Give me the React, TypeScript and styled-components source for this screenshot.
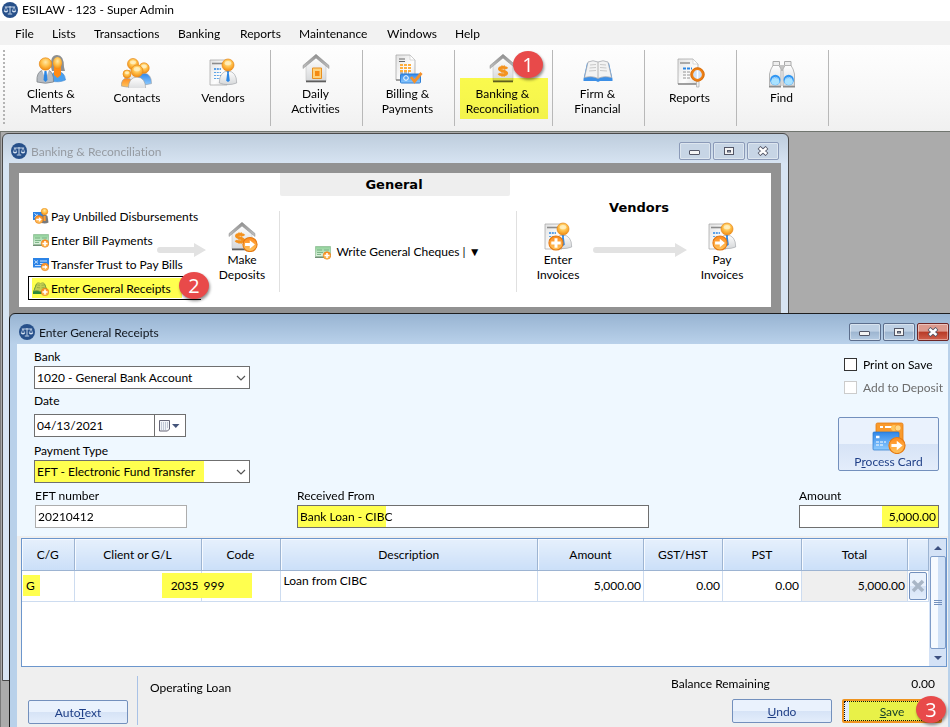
import React from "react";
import styled, { createGlobalStyle, css } from "styled-components";

const YELLOW = "#ffff4f";
const UI_FONT = 'Lato, "Open Sans", sans-serif';

const GlobalStyle = createGlobalStyle`
  * { box-sizing: border-box; }
  html, body { margin: 0; }
  body, button, input, select {
    font-family: ${UI_FONT};
    font-size: 12px;
    line-height: 15px;
    color: #000;
    font-variant-ligatures: none;
  }
  button { padding: 0; border: 0; background: none; cursor: pointer; }
  svg { display: block; flex: none; }
`;

/* ---------- icons ---------- */

const HiddenSvg = styled.svg`
  position: absolute;
`;

const Defs = () => (
  <HiddenSvg width="0" height="0" aria-hidden="true">
    <defs>
      <radialGradient id="gold" cx="0.5" cy="0.35" r="0.65">
        <stop offset="0" stopColor="#ffe9a8" />
        <stop offset="0.5" stopColor="#ffc04a" />
        <stop offset="1" stopColor="#f08a10" />
      </radialGradient>
      <linearGradient id="orange" x1="0" y1="0" x2="0" y2="1">
        <stop offset="0" stopColor="#ff8a1c" />
        <stop offset="1" stopColor="#ffc560" />
      </linearGradient>
      <linearGradient id="blue" x1="0" y1="0" x2="0" y2="1">
        <stop offset="0" stopColor="#2f86e8" />
        <stop offset="1" stopColor="#8ecbff" />
      </linearGradient>
      <linearGradient id="silver" x1="0" y1="0" x2="0" y2="1">
        <stop offset="0" stopColor="#ffffff" />
        <stop offset="1" stopColor="#d6d8da" />
      </linearGradient>
      <linearGradient id="roof" x1="0" y1="0" x2="0" y2="1">
        <stop offset="0" stopColor="#8f8f8f" />
        <stop offset="1" stopColor="#c2c2c2" />
      </linearGradient>
      <linearGradient id="paper" x1="0" y1="0" x2="1" y2="1">
        <stop offset="0" stopColor="#e2e2e2" />
        <stop offset="0.6" stopColor="#fdfdfd" />
        <stop offset="1" stopColor="#dcdcdc" />
      </linearGradient>
      <linearGradient id="green" x1="0" y1="0" x2="0" y2="1">
        <stop offset="0" stopColor="#8ccf96" />
        <stop offset="1" stopColor="#e4f5e4" />
      </linearGradient>
    </defs>
  </HiddenSvg>
);

const Scales = () => (
  <svg width="16" height="16" viewBox="0 0 16 16" aria-hidden="true">
    <circle cx="8" cy="8" r="8" fill="#27508a" />
    <g stroke="#d5e2f2" fill="none" strokeWidth="0.9">
      <path d="M2.8 5h10.4M8 4v7.6M5.8 12h4.4" />
      <path d="M4 5 2.2 9M4 5l1.8 4M12 5l-1.8 4M12 5l1.8 4" strokeWidth="0.6" />
    </g>
    <path d="M1.9 8.8h4.2a2.1 1.7 0 0 1-4.2 0zM9.9 8.8h4.2a2.1 1.7 0 0 1-4.2 0z" fill="#d5e2f2" />
  </svg>
);

const Bust = ({ x, y, r, body = "url(#silver)", tie = false }: { x: number; y: number; r: number; body?: string; tie?: boolean }) => (
  <g transform={`translate(${x} ${y})`}>
    <path
      d={`M${-r * 1.45} ${r * 3}q0-${r * 1.9} ${r * 1.45}-${r * 2}q${r * 1.45} ${r * 0.1} ${r * 1.45} ${r * 2}q-${r * 1.45} ${r * 0.55}-${r * 2.9} 0z`}
      fill={body}
      stroke="#9a9da2"
      strokeWidth="0.6"
    />
    {tie && <path d={`M-1.3 ${r}h2.6l-.5 2 1 ${r * 1.3}-1.8 1.3-1.8-1.3 1-${r * 1.3}z`} fill="#2b86e4" />}
    <circle r={r} fill="url(#gold)" stroke="#e68a1a" strokeWidth="0.7" />
    <ellipse cy={-r * 0.3} rx={r * 0.55} ry={r * 0.35} fill="#fff3c8" opacity="0.75" />
  </g>
);

const RoundBadge = ({ x, y, r, kind }: { x: number; y: number; r: number; kind: "plus" | "arrow" }) => (
  <g transform={`translate(${x} ${y}) scale(${r / 7})`}>
    <circle r="6.6" fill="url(#orange)" stroke="#e57a12" strokeWidth="1" />
    {kind === "plus" ? (
      <path d="M-1.4-4.4h2.8v3h3v2.8h-3v3h-2.8v-3h-3v-2.8h3z" fill="#fff" />
    ) : (
      <path d="M-4.6-1.3h4.4v-2.7l4.8 4-4.8 4v-2.7h-4.4z" fill="#fff" />
    )}
  </g>
);

const House = () => (
  <>
    <path d="M6 12 16 3l10 9v15H6z" fill="url(#silver)" stroke="#c4c4c4" strokeWidth="0.6" />
    <path d="M6 26.500h20v1.800H6z" fill="#5e5e5e" />
    <path d="M3 14.500v-3L16 .3l13 11.200v3L16 4z" fill="url(#roof)" stroke="#8c8c8c" strokeWidth="0.500" />
  </>
);

const Sheet = ({ x = 3, y = 1, w = 19, h = 26 }: { x?: number; y?: number; w?: number; h?: number }) => (
  <g transform={`translate(${x} ${y})`}>
    <path d={`M0 0h${w - 5}l5 5v${h - 5}H0z`} fill="url(#paper)" stroke="#a9a9a9" strokeWidth="0.8" />
    <path d={`M${w - 5} 0v5h5z`} fill="#fff" stroke="#bbb" strokeWidth="0.5" />
    <path d={`M0 ${h}h${w}`} stroke="#777" strokeWidth="1.2" />
  </g>
);

const InvoiceArt = () => (
  <>
    <path d="M3 2h17v25H3z" fill="url(#paper)" stroke="#ababab" strokeWidth="0.8" />
    <path d="M5 5.5h11" stroke="#8c8c8c" strokeWidth="1.6" />
    <path d="M7 11h7" stroke="#2b86e4" strokeWidth="1.5" strokeDasharray="2 .8" />
    <path d="M7 14.5h7M7 17.5h7M7 20.5h7" stroke="#5ea4e6" strokeWidth="1.2" strokeDasharray="2 .8" />
    <Bust x={21} y={7} r={6} tie />
  </>
);

type Art =
  | "clients" | "contacts" | "vendors" | "house" | "billing" | "bank"
  | "book" | "reports" | "find" | "deposit" | "invoiceAdd" | "invoicePay";

const Dollar = ({ x, y }: { x: number; y: number }) => (
  <g transform={`translate(${x} ${y})`} fill="none" stroke="#f4921e">
    <path d="M4-2.200C3-4-3.600-4.200-3.600-1.900-3.600.600 3.900-.6 3.700 2.200 3.500 4.600-3 4.400-4.200 2.400" strokeWidth="2.800" />
    <path d="M-1-5.800V5.800M1.200-5.800V5.800" strokeWidth="1.100" />
  </g>
);

const art: Record<Art, React.ReactNode> = {
  clients: (
    <>
      <path d="M16 13q-1-12 6-12t7 12l1 4h-13z" fill="#8d8f90" />
      <path d="M16 27q0-9 6-10 8 1 8.500 9-6 3-14.500 1z" fill="#4aa0ee" stroke="#2d78c8" strokeWidth="0.5" />
      <path d="M19 13h7v8l-3.500 3-3.500-3z" fill="#ff8a14" />
      <ellipse cx="22.500" cy="9" rx="4.500" ry="6" fill="url(#gold)" />
      <path d="M2 28q-1-10 6-12h5q6 2 5.500 12-8 2.500-16.500 0z" fill="#b7bcc2" stroke="#777b80" strokeWidth="0.7" />
      <path d="m7 16 3.500 9 3.500-9z" fill="#fff" />
      <path d="M9.500 17h2l1 9-2 2-2-2z" fill="#2b86e4" />
      <circle cx="10.500" cy="10" r="6.200" fill="url(#gold)" stroke="#e68a1a" strokeWidth="0.7" />
    </>
  ),
  contacts: (
    <>
      <Bust x={12} y={6} r={5.500} />
      <Bust x={23} y={10} r={5.200} body="url(#blue)" />
      <Bust x={6} y={16} r={4} body="url(#orange)" />
      <Bust x={16} y={13} r={6} />
    </>
  ),
  vendors: <InvoiceArt />,
  house: (
    <>
      <House />
      <path d="M12.500 14h9v10.500h-9z" fill="#ffd27a" stroke="#e89020" />
      <path d="M15 17h4.500v5H15z" fill="#f58a12" />
    </>
  ),
  billing: (
    <>
      <Sheet x={4} y={1} w={19} h={25} />
      <path d="M7 5h6M7 7.500h6" stroke="#666" />
      <path d="M8 11h11M8 14h11M8 17h11" stroke="#ffae3c" strokeWidth="1.800" strokeDasharray="3 1" />
      <path d="M8 19h9" stroke="#777" strokeDasharray="3 1" />
      <rect x="8.500" y="20" width="20" height="9" rx="1" fill="url(#blue)" stroke="#2f7fd6" />
      <circle cx="14" cy="24" r="2.300" fill="none" stroke="#fff" />
      <path d="m19 23 3.500 4.500L29.500 19" fill="none" stroke="#f5912a" strokeWidth="2.800" />
    </>
  ),
  bank: (
    <>
      <House />
      <Dollar x={16} y={17} />
    </>
  ),
  book: (
    <>
      <path d="M1.500 25 5 9h22l3.500 16v2H18l-2 1-2-1H1.500z" fill="#3c8fe6" />
      <path d="M2.500 23.500 6 8q5-2.500 10 0 5-2.500 10 0l3.500 15.500q-8-2-13.500 1-5.500-3-13.500-1z" fill="#f3f3f3" stroke="#a7aab0" strokeWidth="0.8" />
      <path d="M16 8v16" stroke="#b4b4b4" />
      <path d="m8 11 6-.5M7.500 14l6.500-.5M7 17l7-.5M18 10.500l6 .5M18 13.500l6.500.5M18 16.500l7 .5" stroke="#bdbdbd" strokeWidth="0.8" />
    </>
  ),
  reports: (
    <>
      <Sheet x={4} y={1} w={20} h={25} />
      <path d="M6 5h10" stroke="#999" strokeWidth="1.600" />
      <path d="M9 10.500h9" stroke="#2b86e4" strokeWidth="2" strokeDasharray="3 1" />
      <path d="M9 14h8M9 17h8M9 20h8" stroke="#888" strokeWidth="0.900" strokeDasharray="3 1" />
      <path d="M22.500 23H25v6h-2.500z" fill="#eee" stroke="#a7a7a7" strokeWidth="0.700" />
      <circle cx="23.500" cy="16.500" r="5.800" fill="#cfe2fa" stroke="#ee7f14" strokeWidth="2.800" />
      <circle cx="23.500" cy="16.500" r="6.600" fill="none" stroke="#c96a10" strokeWidth="0.600" />
      <path d="M23.500 12.500v8" stroke="#fff" strokeWidth="1.500" />
    </>
  ),
  find: (
    <>
      <path d="M7 3.500h6.500v5H7zM18.500 3.500H25v5h-6.500z" fill="#eee" stroke="#aaa" />
      <path d="M13 7h6v6h-6z" fill="#c4c4c4" />
      <path d="m5 11 2-3.500h6l2 3.500v17H3.500V16zM27 11l-2-3.500h-6L17 11v17h11.500V16z" fill="url(#silver)" stroke="#a5a5a5" strokeWidth="0.800" />
      <path d="M3 28h12v1.500H3zM17 28h12v1.500H17z" fill="#8c8c8c" />
      <ellipse cx="9.300" cy="22" rx="5.200" ry="5.200" fill="#2f96f2" />
      <ellipse cx="22.700" cy="22" rx="5.200" ry="5.200" fill="#2f96f2" />
      <ellipse cx="9.300" cy="23.500" rx="4.200" ry="3.400" fill="#a9e2ff" />
      <ellipse cx="22.700" cy="23.500" rx="4.200" ry="3.400" fill="#a9e2ff" />
      <path d="M6 20.500q3.300-2.500 6.600 0M19.400 20.500q3.300-2.500 6.600 0" fill="none" stroke="#9fd2ff" />
    </>
  ),
  deposit: (
    <>
      <House />
      <Dollar x={14} y={16} />
      <RoundBadge x={24} y={22.500} r={7.500} kind="arrow" />
    </>
  ),
  invoiceAdd: (
    <>
      <InvoiceArt />
      <RoundBadge x={14} y={21} r={7.500} kind="plus" />
    </>
  ),
  invoicePay: (
    <>
      <InvoiceArt />
      <RoundBadge x={14} y={21} r={7.500} kind="arrow" />
    </>
  ),
};

const BigIcon = ({ name }: { name: Art }) => (
  <svg width="32" height="30" viewBox="0 0 32 30" aria-hidden="true">{art[name]}</svg>
);

type SmallArt = "disburse" | "cheque" | "transfer" | "receipt";

const SmallIcon = ({ name }: { name: SmallArt }) => (
  <svg width="16" height="16" viewBox="0 0 16 16" aria-hidden="true">
    {name === "disburse" && (
      <>
        <path d="M0 4h10v8H0z" fill="#2b83e6" />
        <path d="m1.500 5.500 3.500 3M1.500 9.500 5 6.500" stroke="#d8ebff" />
        <path d="M8.500 8q3-2.500 6 0l1 6.500q-3 1.500-7 .5z" fill="#77797c" />
        <path d="M10.500 8h2.200v5h-2.200z" fill="#ff9a2c" />
        <circle cx="11.500" cy="3.600" r="3.300" fill="url(#gold)" stroke="#e68a1a" strokeWidth="0.500" />
        <RoundBadge x={6} y={11.500} r={4.200} kind="arrow" />
      </>
    )}
    {name === "cheque" && (
      <>
        <path d="M.5 2.500h15v10H.5z" fill="url(#green)" stroke="#7fb487" strokeWidth="0.600" />
        <path d="M0 13.300h9" stroke="#4f7454" />
        <path d="M2 6h5M9 6h5M2 8.500h6M2 10.500h4" stroke="#6da878" strokeWidth="0.800" />
        <RoundBadge x={12} y={11.500} r={4} kind="plus" />
      </>
    )}
    {name === "transfer" && (
      <>
        <path d="M0 2h16v9.500H0z" fill="#2b83e6" />
        <path d="M1.500 4.500 5 7.500M5 4.500 1.500 7.500M7 5h7M7 7.500h7M2 9.500h6" stroke="#d8ebff" strokeWidth="0.900" />
        <RoundBadge x={12} y={11} r={4} kind="arrow" />
      </>
    )}
    {name === "receipt" && (
      <>
        <path d="M0 12 3 4h9l3 8v2H0z" fill="#2d8a3c" />
        <path d="m1 11 3-8q2-.8 3.500.4Q9 2.200 11 3l3 8q-3-1-6.500.6Q4 10 1 11z" fill="#c3cf52" stroke="#8da03c" strokeWidth="0.600" />
        <path d="m4.500 5 2.500.3M4 7.500l3 .3M8.500 5.300l2.500-.3M8.500 7.800l3-.3" stroke="#8da03c" strokeWidth="0.700" />
        <RoundBadge x={12} y={12} r={4} kind="plus" />
      </>
    )}
  </svg>
);

const CardsIcon = () => (
  <svg width="34" height="32" viewBox="0 0 34 32" aria-hidden="true">
    <rect x="4" y="1" width="27" height="20" rx="1.500" fill="#f99a2c" stroke="#e47c10" strokeWidth="0.800" />
    <path d="M8 5h3M13 5h8" stroke="#fff" strokeWidth="2" />
    <circle cx="22" cy="6" r="3" fill="#ffc65c" />
    <circle cx="26" cy="6" r="3" fill="#ffd98a" stroke="#ee8c1c" strokeWidth="0.500" />
    <rect x="1" y="10" width="26" height="18" rx="1" fill="url(#blue)" stroke="#2776cc" strokeWidth="0.700" />
    <path d="M4 15h3.500" stroke="#fff" strokeWidth="2.500" />
    <path d="M4 20h10M4 23h7M17 20h5" stroke="#fff" strokeWidth="1.200" strokeDasharray="3 1" />
    <RoundBadge x={25} y={23.500} r={8.500} kind="arrow" />
  </svg>
);

const FlowArrow = ({ length }: { length: number }) => (
  <svg width={length} height="14" viewBox={`0 0 ${length} 14`} aria-hidden="true">
    <path d={`M3 4h${length - 15}V0l12 7-12 7v-4H3a3 3 0 0 1 0-6z`} fill="#e2e2e2" />
  </svg>
);

/* ---------- application chrome ---------- */

const AppShell = styled.div`
  display: flex;
  flex-direction: column;
  height: 100vh;
  overflow: hidden;
`;

const AppTitle = styled.header`
  display: flex;
  align-items: center;
  gap: 4px;
  height: 21px;
  padding: 0 2px 2px;
  background: #fff;
`;

const MenuBar = styled.nav`
  display: flex;
  align-items: center;
  gap: 19px;
  height: 24px;
  padding-left: 15px;
  background: #f2f2f2;
`;

const MenuItem = styled.button<{ $width: number }>`
  width: ${(p) => p.$width}px;
  text-align: left;
  white-space: nowrap;
`;

const Toolbar = styled.div`
  display: flex;
  align-items: stretch;
  height: 87px;
  padding: 5px 0;
  background: linear-gradient(#fefefe, #f7f7f7 60%, #f0f0f0);
  border-bottom: 1px solid #70756f;
`;

const Grip = styled.div`
  width: 8px;
  padding-left: 3px;
  &::before {
    content: "";
    display: block;
    width: 2px;
    height: 75px;
    background: repeating-linear-gradient(#b4b4b4 0 2px, transparent 2px 4px);
  }
`;

const ToolGroup = styled.div`
  display: flex;
  padding-right: 4px;
  border-right: 1px solid #b8b8b8;
`;

const ToolButton = styled.button<{ $width?: number; $single?: boolean; $plain?: boolean }>`
  position: relative;
  display: flex;
  flex-direction: column;
  align-items: center;
  gap: 2px;
  width: ${(p) => p.$width ?? 92}px;
  padding-top: ${(p) => (p.$single ? 8 : 4)}px;
  white-space: pre-line;
  ${(p) =>
    !p.$plain &&
    css`
      padding-right: 2px;
      border-right: 1px solid #b8b8b8;
    `}
`;

const ToolMark = styled.span`
  position: absolute;
  inset: 28px 4px 7px 5px;
  background: ${YELLOW};
  mix-blend-mode: multiply;
`;

const Step = styled.span<{ $top: number; $right: number }>`
  position: absolute;
  z-index: 2;
  top: ${(p) => p.$top}px;
  right: ${(p) => p.$right}px;
  display: grid;
  place-items: center;
  width: 30px;
  height: 27px;
  border-radius: 50%;
  background: #e84a4a;
  box-shadow: 1px 2px 3px rgba(0, 0, 0, 0.45);
  color: #fff;
  font-family: "Open Sans", sans-serif;
  font-size: 20px;
  line-height: 27px;
`;

const Desktop = styled.main`
  position: relative;
  flex: 1;
  overflow: hidden;
  background: #ababab;
  border-left: 1px solid #7a7a7a;
`;

/* ---------- windows ---------- */

const Frame = styled.section<{ $active?: boolean }>`
  position: absolute;
  display: flex;
  flex-direction: column;
  padding: 0 7px 8px;
  border: 1px solid ${(p) => (p.$active ? "#1e1e1e" : "#4a4a4a")};
  border-radius: 6px 6px 0 0;
  background: ${(p) =>
    p.$active
      ? "linear-gradient(#98b4d2, #b9d1ea 30px)"
      : "linear-gradient(#becddd, #d7e4f2 30px)"};
`;

const BankingFrame = styled(Frame)`
  top: 1px;
  left: 1px;
  width: 787px;
  height: 548px;
  padding-left: 6px;
`;

const ReceiptsFrame = styled(Frame)`
  top: 181px;
  left: 8px;
  right: -6px;
  bottom: -20px;
`;

const Caption = styled.header<{ $active?: boolean }>`
  display: flex;
  align-items: center;
  gap: 4px;
  height: ${(p) => (p.$active ? 30 : 29)}px;
  padding: ${(p) => (p.$active ? "6px 1px 0 2px" : "5px 4px 0 2px")};
  color: ${(p) => (p.$active ? "#10151c" : "#969ba2")};
`;

const CaptionText = styled.h1`
  flex: 1;
  margin: 0;
  font-size: 12px;
  font-weight: 400;
`;

const CaptionButtons = styled.div`
  display: flex;
  gap: 2px;
  margin-right: -2px;
`;

const CaptionButton = styled.button<{ $tone?: "red" | "pale" }>`
  display: grid;
  place-items: center;
  width: 32px;
  height: 18px;
  border: 1px solid ${(p) => (p.$tone === "red" ? "#6d2626" : p.$tone === "pale" ? "#8b9ab8" : "#5c6e8c")};
  border-radius: 2px;
  box-shadow: inset 0 0 0 1px rgba(255, 255, 255, 0.4);
  background: ${(p) =>
    p.$tone === "red"
      ? "linear-gradient(#dc9a8e 0 45%, #b83a26 50%, #d0604c)"
      : p.$tone === "pale"
        ? "#c7d5e5"
        : "linear-gradient(#bed0e4 0 45%, #9db5d0 50%, #b4cae2)"};
`;

const Glyph = ({ kind }: { kind: "min" | "max" | "close" }) => (
  <svg width="12" height="10" viewBox="0 0 12 10" aria-hidden="true">
    {kind === "min" && <rect x="0.500" y="4.500" width="10" height="4" rx="0.500" fill="#f4f4f4" stroke="#535666" />}
    {kind === "max" && (
      <>
        <rect x="1.500" y="1.500" width="9" height="7" fill="#f4f4f4" stroke="#535666" />
        <rect x="4.500" y="4.500" width="3" height="1.500" fill="#b8c8da" stroke="#535666" />
      </>
    )}
    {kind === "close" && (
      <>
        <path d="m2 1.500 8 7M10 1.500l-8 7" stroke="#535666" strokeWidth="4.200" />
        <path d="m2.500 2 7 6M9.500 2l-7 6" stroke="#fff" strokeWidth="2.400" />
      </>
    )}
  </svg>
);

const WindowCaption = ({ title, active }: { title: string; active?: boolean }) => (
  <Caption $active={active}>
    <Scales />
    <CaptionText>{title}</CaptionText>
    <CaptionButtons>
      <CaptionButton aria-label="Minimize" $tone={active ? undefined : "pale"}><Glyph kind="min" /></CaptionButton>
      <CaptionButton aria-label="Maximize" $tone={active ? undefined : "pale"}><Glyph kind="max" /></CaptionButton>
      <CaptionButton aria-label="Close" $tone={active ? "red" : "pale"}><Glyph kind="close" /></CaptionButton>
    </CaptionButtons>
  </Caption>
);

/* ---------- banking window ---------- */

const BankingBody = styled.div`
  flex: 1;
  padding: 10px;
  background: #929292;
`;

const FlowPanel = styled.div`
  display: flex;
  height: 134px;
  background: #fff;
`;

const DepositsPane = styled.div`
  position: relative;
  display: flex;
  align-items: flex-start;
  width: 260px;
  padding: 31px 0 0 9px;
`;

const TaskList = styled.div`
  display: flex;
  flex-direction: column;
  width: 173px;
`;

const TaskLink = styled.button<{ $marked?: boolean }>`
  display: flex;
  align-items: center;
  gap: 2px;
  height: 24px;
  padding-left: ${(p) => (p.$marked ? 4 : 5)}px;
  white-space: nowrap;
  ${(p) =>
    p.$marked &&
    css`
      border: 1px solid #000;
      border-right: 0;
      background: linear-gradient(${YELLOW}, ${YELLOW}) 3px 1px / 150px 20px no-repeat;
    `}
`;

const DepositArrow = styled.div`
  margin: 39px 0 0 -44px;
`;

const FlowButton = styled.button`
  display: flex;
  flex-direction: column;
  align-items: center;
  width: 60px;
  white-space: pre-line;
`;

const DepositSlot = styled.div`
  padding: 18px 0 0 6px;
`;

const GeneralPane = styled.div`
  display: flex;
  flex-direction: column;
  width: 238px;
`;

const PaneTitle = styled.h2<{ $shaded?: boolean }>`
  margin: 0;
  padding-right: 2px;
  font: bold 13px/23px "DejaVu Sans", sans-serif;
  text-align: center;
  ${(p) =>
    p.$shaded &&
    css`
      width: 230px;
      margin-left: 1px;
      background: #eee;
      border-radius: 0 0 2px 2px;
    `}
`;

const GeneralArea = styled.div`
  display: flex;
  align-items: center;
  justify-content: center;
  height: 81px;
  margin-top: 15px;
  border: solid #e0e0e0;
  border-width: 0 1px;
`;

const ChequeButton = styled.button`
  display: flex;
  align-items: center;
  gap: 5px;
  white-space: nowrap;
`;

const VendorsPane = styled.div`
  flex: 1;
  padding-top: 23px;
`;

const VendorsTitle = styled(PaneTitle)`
  padding-right: 10px;
`;

const VendorsRow = styled.div`
  display: flex;
  justify-content: space-between;
  padding: 3px 19px 0 11px;
`;

const VendorArrow = styled.div`
  padding-top: 21px;
`;

/* ---------- receipts window ---------- */

const ReceiptsBody = styled.div`
  flex: 1;
  display: flex;
  flex-direction: column;
  background: #efefef;
`;

const FormArea = styled.div`
  padding: 4px 9px 8px 17px;
  background: #eff8ff;
`;

const FormTop = styled.div`
  display: flex;
  justify-content: space-between;
`;

const Stack = styled.div`
  display: flex;
  flex-direction: column;
  width: 216px;
`;

const Field = styled.div<{ $gap?: number }>`
  display: flex;
  flex-direction: column;
  margin-top: ${(p) => p.$gap ?? 0}px;
`;

const Label = styled.label`
  height: 18px;
  line-height: 18px;
`;

const boxed = css`
  height: 23px;
  border: 1px solid #6f6f6f;
  border-radius: 0;
  background-color: #fff;
  outline: 0;
`;

const TextBox = styled.input<{ $mark?: number; $right?: boolean; $light?: boolean }>`
  ${boxed}
  width: 100%;
  min-width: 0;
  padding: 0 2px;
  text-align: ${(p) => (p.$right ? "right" : "left")};
  ${(p) => p.$light && css`border-color: #adadad;`}
  ${(p) =>
    p.$mark &&
    css`
      background: linear-gradient(${YELLOW}, ${YELLOW}) ${p.$right ? "right" : "left"} top / ${p.$mark}px 100% no-repeat #fff;
    `}
`;

const SelectWrap = styled.div`
  display: grid;
  align-items: center;
  > * { grid-area: 1 / 1; }
  > svg { justify-self: end; margin-right: 4px; pointer-events: none; }
`;

const SelectBox = styled.select<{ $mark?: number }>`
  ${boxed}
  appearance: none;
  width: 100%;
  padding: 0 2px;
  ${(p) =>
    p.$mark &&
    css`background: linear-gradient(${YELLOW}, ${YELLOW}) left top / ${p.$mark}px 100% no-repeat #fff;`}
`;

const Chevron = () => (
  <svg width="10" height="8" viewBox="0 0 10 8" aria-hidden="true">
    <path d="m1 2 4 4 4-4" fill="none" stroke="#555" strokeWidth="1.200" />
  </svg>
);

const DateRow = styled.div`
  display: flex;
  width: 152px;
  margin-top: 4px;
`;

const CalendarButton = styled.button`
  ${boxed}
  display: flex;
  flex: none;
  align-items: center;
  justify-content: center;
  width: 32px;
  margin-left: -1px;
`;

const SideStack = styled.div`
  display: flex;
  flex-direction: column;
  width: 101px;
  padding-top: 5px;
`;

const CheckRow = styled.label<{ $off?: boolean }>`
  display: flex;
  align-items: center;
  gap: 6px;
  height: 23px;
  padding-left: 6px;
  white-space: nowrap;
  color: ${(p) => (p.$off ? "#6d6d6d" : "#000")};
`;

const CheckBox = styled.input`
  appearance: none;
  flex: none;
  width: 13px;
  height: 13px;
  margin: 0;
  border: 1px solid #333;
  background: #fff;
  &:disabled { border-color: #ccc; }
`;

const PushButton = styled.button`
  width: 100px;
  height: 24px;
  border: 1px solid #7390bd;
  border-radius: 2px;
  background: linear-gradient(#eaf2fd 0 50%, #d6e3f6 50%, #e3edfb);
  color: #1f3f87;
`;

const CardButton = styled(PushButton)`
  display: flex;
  flex-direction: column;
  align-items: center;
  width: 101px;
  height: 54px;
  margin-top: 18px;
  padding-top: 4px;
`;

const FormBottom = styled.div`
  display: flex;
  padding: 4px 0 0 1px;
`;

const NumberField = styled(Field)`
  width: 152px;
`;

const FromField = styled(Field)`
  flex: 1;
  margin: 0 150px 0 110px;
`;

const AmountField = styled(Field)`
  width: 140px;
`;

const GridArea = styled.div`
  display: flex;
  height: 129px;
  margin: 2px 1px 0 4px;
  border: 1px solid #6c96cc;
  background: #fff;
`;

const GridScroll = styled.div`
  flex: 1;
`;

const Table = styled.table`
  width: 100%;
  table-layout: fixed;
  border-collapse: collapse;
`;

const HeadCell = styled.th`
  height: 31px;
  padding: 0;
  font-weight: 400;
  background: linear-gradient(#e6f0fc, #cbdff8);
  border-right: 1px solid #9db4d2;
  border-bottom: 1px solid #9db4d2;
  box-shadow: inset 1px 1px 0 #f6faff;
`;

const Cell = styled.td<{ $right?: boolean; $top?: boolean; $grey?: boolean; $tight?: boolean }>`
  height: 31px;
  padding: ${(p) => (p.$top ? "2px 3px" : p.$tight ? "0 1px" : "0 2px 0 3px")};
  text-align: ${(p) => (p.$right ? "right" : "left")};
  vertical-align: ${(p) => (p.$top ? "top" : "middle")};
  background: ${(p) => (p.$grey ? "#efefef" : "transparent")};
  border-right: 1px solid #cddcf0;
  border-bottom: 1px solid #cddcf0;
`;

const Marked = styled.span<{ $width: number; $right?: boolean; $short?: boolean }>`
  display: inline-block;
  width: ${(p) => p.$width}px;
  height: ${(p) => (p.$short ? 21 : 25)}px;
  line-height: ${(p) => (p.$short ? 21 : 25)}px;
  margin: 0 -2px;
  padding: 0 3px;
  text-align: ${(p) => (p.$right ? "right" : "left")};
  background: ${YELLOW};
  vertical-align: middle;
`;

const DeleteButton = styled(PushButton)`
  display: grid;
  place-items: center;
  width: 18px;
  height: 28px;
`;

const ScrollBar = styled.div`
  display: flex;
  flex-direction: column;
  align-items: center;
  width: 17px;
  background: #d4e2f6;
`;

const ScrollArrow = styled.button<{ $down?: boolean }>`
  display: grid;
  place-items: center;
  width: 17px;
  height: 17px;
  &::before {
    content: "";
    border: solid transparent;
    border-width: 4px;
    ${(p) => (p.$down ? "border-top-color: #3c5080; margin-top: 4px;" : "border-bottom-color: #3c5080; margin-bottom: 4px;")}
  }
`;

const Thumb = styled.div`
  display: grid;
  place-items: center;
  flex: 1;
  width: 16px;
  border: 1px solid #7f9cc8;
  border-radius: 2px;
  background: linear-gradient(90deg, #f6faff 50%, #cfe0f6 50%);
  &::before {
    content: "";
    width: 8px;
    height: 5px;
    background: repeating-linear-gradient(#7390bd 0 1px, transparent 1px 2px);
  }
`;

const Footer = styled.footer`
  display: flex;
  align-items: flex-start;
  padding: 9px 6px 0 11px;
`;

const AutoTextSlot = styled.div`
  padding: 24px 9px 0 0;
  height: 49px;
  border-right: 1px solid #a9c2e6;
`;

const AccountName = styled.div`
  flex: 1;
  padding: 4px 0 0 12px;
`;

const Summary = styled.div`
  width: 271px;
`;

const Balance = styled.div`
  display: flex;
  justify-content: space-between;
  padding: 0 7px 8px 0;
`;

const Actions = styled.div`
  display: flex;
  justify-content: flex-end;
  gap: 10px;
`;

const SaveSlot = styled.div`
  position: relative;
`;

const SaveButton = styled(PushButton)`
  border: 2px solid #ef9420;
  outline: 1px dotted #111;
  outline-offset: -3px;
  background: linear-gradient(90deg, #e3edfb 5px, #e8f148 5px);
  color: #17402a;
`;

const menus: [string, number][] = [
  ["File", 18], ["Lists", 23], ["Transactions", 65], ["Banking", 43],
  ["Reports", 40], ["Maintenance", 69], ["Windows", 49], ["Help", 30],
];

const columns: [string, number | undefined][] = [
  ["C/G", 52], ["Client or G/L", 127], ["Code", 79], ["Description", undefined],
  ["Amount", 106], ["GST/HST", 79], ["PST", 79], ["Total", 106], ["", 21],
];

export default function App() {
  return (
    <AppShell>
      <GlobalStyle />
      <Defs />
      <AppTitle><Scales />ESILAW - 123 - Super Admin</AppTitle>
      <MenuBar>
        {menus.map(([name, width]) => <MenuItem key={name} $width={width}>{name}</MenuItem>)}
      </MenuBar>
      <Toolbar>
        <Grip />
        <ToolGroup>
          <ToolButton $width={86} $plain><BigIcon name="clients" />{"Clients &\nMatters"}</ToolButton>
          <ToolButton $width={86} $plain $single><BigIcon name="contacts" />Contacts</ToolButton>
          <ToolButton $width={86} $plain $single><BigIcon name="vendors" />Vendors</ToolButton>
        </ToolGroup>
        <ToolButton><BigIcon name="house" />{"Daily\nActivities"}</ToolButton>
        <ToolButton><BigIcon name="billing" />{"Billing &\nPayments"}</ToolButton>
        <ToolButton $width={98}>
          <BigIcon name="bank" />{"Banking &\nReconciliation"}
          <ToolMark />
          <Step $top={1} $right={9}>1</Step>
        </ToolButton>
        <ToolButton><BigIcon name="book" />{"Firm &\nFinancial"}</ToolButton>
        <ToolButton $single><BigIcon name="reports" />Reports</ToolButton>
        <ToolButton $single><BigIcon name="find" />Find</ToolButton>
      </Toolbar>

      <Desktop>
        <BankingFrame>
          <WindowCaption title="Banking & Reconciliation" />
          <BankingBody>
            <FlowPanel>
              <DepositsPane>
                <TaskList>
                  <TaskLink><SmallIcon name="disburse" />Pay Unbilled Disbursements</TaskLink>
                  <TaskLink><SmallIcon name="cheque" />Enter Bill Payments</TaskLink>
                  <TaskLink><SmallIcon name="transfer" />Transfer Trust to Pay Bills</TaskLink>
                  <TaskLink $marked><SmallIcon name="receipt" />Enter General Receipts</TaskLink>
                </TaskList>
                <DepositArrow><FlowArrow length={49} /></DepositArrow>
                <DepositSlot>
                  <FlowButton><BigIcon name="deposit" />{"Make\nDeposits"}</FlowButton>
                </DepositSlot>
                <Step $top={99} $right={70}>2</Step>
              </DepositsPane>
              <GeneralPane>
                <PaneTitle $shaded>General</PaneTitle>
                <GeneralArea>
                  <ChequeButton><SmallIcon name="cheque" />Write General Cheques | ▼</ChequeButton>
                </GeneralArea>
              </GeneralPane>
              <VendorsPane>
                <VendorsTitle>Vendors</VendorsTitle>
                <VendorsRow>
                  <FlowButton><BigIcon name="invoiceAdd" />{"Enter\nInvoices"}</FlowButton>
                  <VendorArrow><FlowArrow length={94} /></VendorArrow>
                  <FlowButton><BigIcon name="invoicePay" />{"Pay\nInvoices"}</FlowButton>
                </VendorsRow>
              </VendorsPane>
            </FlowPanel>
          </BankingBody>
        </BankingFrame>

        <ReceiptsFrame $active>
          <WindowCaption title="Enter General Receipts" active />
          <ReceiptsBody>
            <FormArea>
              <FormTop>
                <Stack>
                  <Field>
                    <Label htmlFor="bank">Bank</Label>
                    <SelectWrap>
                      <SelectBox id="bank"><option>1020 - General Bank Account</option></SelectBox>
                      <Chevron />
                    </SelectWrap>
                  </Field>
                  <Field $gap={3}>
                    <Label htmlFor="date">Date</Label>
                    <DateRow>
                      <TextBox id="date" defaultValue="04/13/2021" />
                      <CalendarButton aria-label="Choose date">
                        <svg width="22" height="12" viewBox="0 0 22 12" aria-hidden="true">
                          <path d="M.5.500h10v8.500l-2 2h-8z" fill="#f2f4f8" stroke="#667" />
                          <path d="M2 3h7M2 5h7M2 7h7M2 9h5" stroke="#8d9ab2" strokeDasharray="1 1" />
                          <path d="M13 4h7.500l-3.700 4z" fill="#44557a" />
                        </svg>
                      </CalendarButton>
                    </DateRow>
                  </Field>
                  <Field $gap={5}>
                    <Label htmlFor="type">Payment Type</Label>
                    <SelectWrap>
                      <SelectBox id="type" $mark={169}><option>EFT - Electronic Fund Transfer</option></SelectBox>
                      <Chevron />
                    </SelectWrap>
                  </Field>
                </Stack>
                <SideStack>
                  <CheckRow><CheckBox type="checkbox" />Print on Save</CheckRow>
                  <CheckRow $off><CheckBox type="checkbox" disabled />Add to Deposit</CheckRow>
                  <CardButton><CardsIcon /><span>P<u>r</u>ocess Card</span></CardButton>
                </SideStack>
              </FormTop>
              <FormBottom>
                <NumberField>
                  <Label htmlFor="eft">EFT number</Label>
                  <TextBox id="eft" defaultValue="20210412" $light />
                </NumberField>
                <FromField>
                  <Label htmlFor="from">Received From</Label>
                  <TextBox id="from" defaultValue="Bank Loan - CIBC" $mark={88} />
                </FromField>
                <AmountField>
                  <Label htmlFor="amount">Amount</Label>
                  <TextBox id="amount" defaultValue="5,000.00" $mark={56} $right />
                </AmountField>
              </FormBottom>
            </FormArea>

            <GridArea>
              <GridScroll>
                <Table>
                  <colgroup>
                    {columns.map(([name, width]) => <col key={name} width={width} />)}
                  </colgroup>
                  <thead>
                    <tr>{columns.map(([name]) => <HeadCell key={name} scope="col">{name}</HeadCell>)}</tr>
                  </thead>
                  <tbody>
                    <tr>
                      <Cell><Marked $width={17} $short>G</Marked></Cell>
                      <Cell $right $tight><Marked $width={40} $right>2035</Marked></Cell>
                      <Cell $tight><Marked $width={51}>999</Marked></Cell>
                      <Cell $top>Loan from CIBC</Cell>
                      <Cell $right>5,000.00</Cell>
                      <Cell $right>0.00</Cell>
                      <Cell $right>0.00</Cell>
                      <Cell $right $grey>5,000.00</Cell>
                      <Cell $tight>
                        <DeleteButton aria-label="Delete row">
                          <svg width="14" height="14" viewBox="0 0 14 14" aria-hidden="true">
                            <path d="m2 2 10 10M12 2 2 12" stroke="#a9b6c6" strokeWidth="3.500" />
                          </svg>
                        </DeleteButton>
                      </Cell>
                    </tr>
                  </tbody>
                </Table>
              </GridScroll>
              <ScrollBar>
                <ScrollArrow aria-label="Scroll up" />
                <Thumb />
                <ScrollArrow aria-label="Scroll down" $down />
              </ScrollBar>
            </GridArea>

            <Footer>
              <AutoTextSlot><PushButton>Auto<u>T</u>ext</PushButton></AutoTextSlot>
              <AccountName>Operating Loan</AccountName>
              <Summary>
                <Balance><span>Balance Remaining</span><span>0.00</span></Balance>
                <Actions>
                  <PushButton><u>U</u>ndo</PushButton>
                  <SaveSlot>
                    <SaveButton><u>S</u>ave</SaveButton>
                    <Step $top={-3} $right={-4}>3</Step>
                  </SaveSlot>
                </Actions>
              </Summary>
            </Footer>
          </ReceiptsBody>
        </ReceiptsFrame>
      </Desktop>
    </AppShell>
  );
}
